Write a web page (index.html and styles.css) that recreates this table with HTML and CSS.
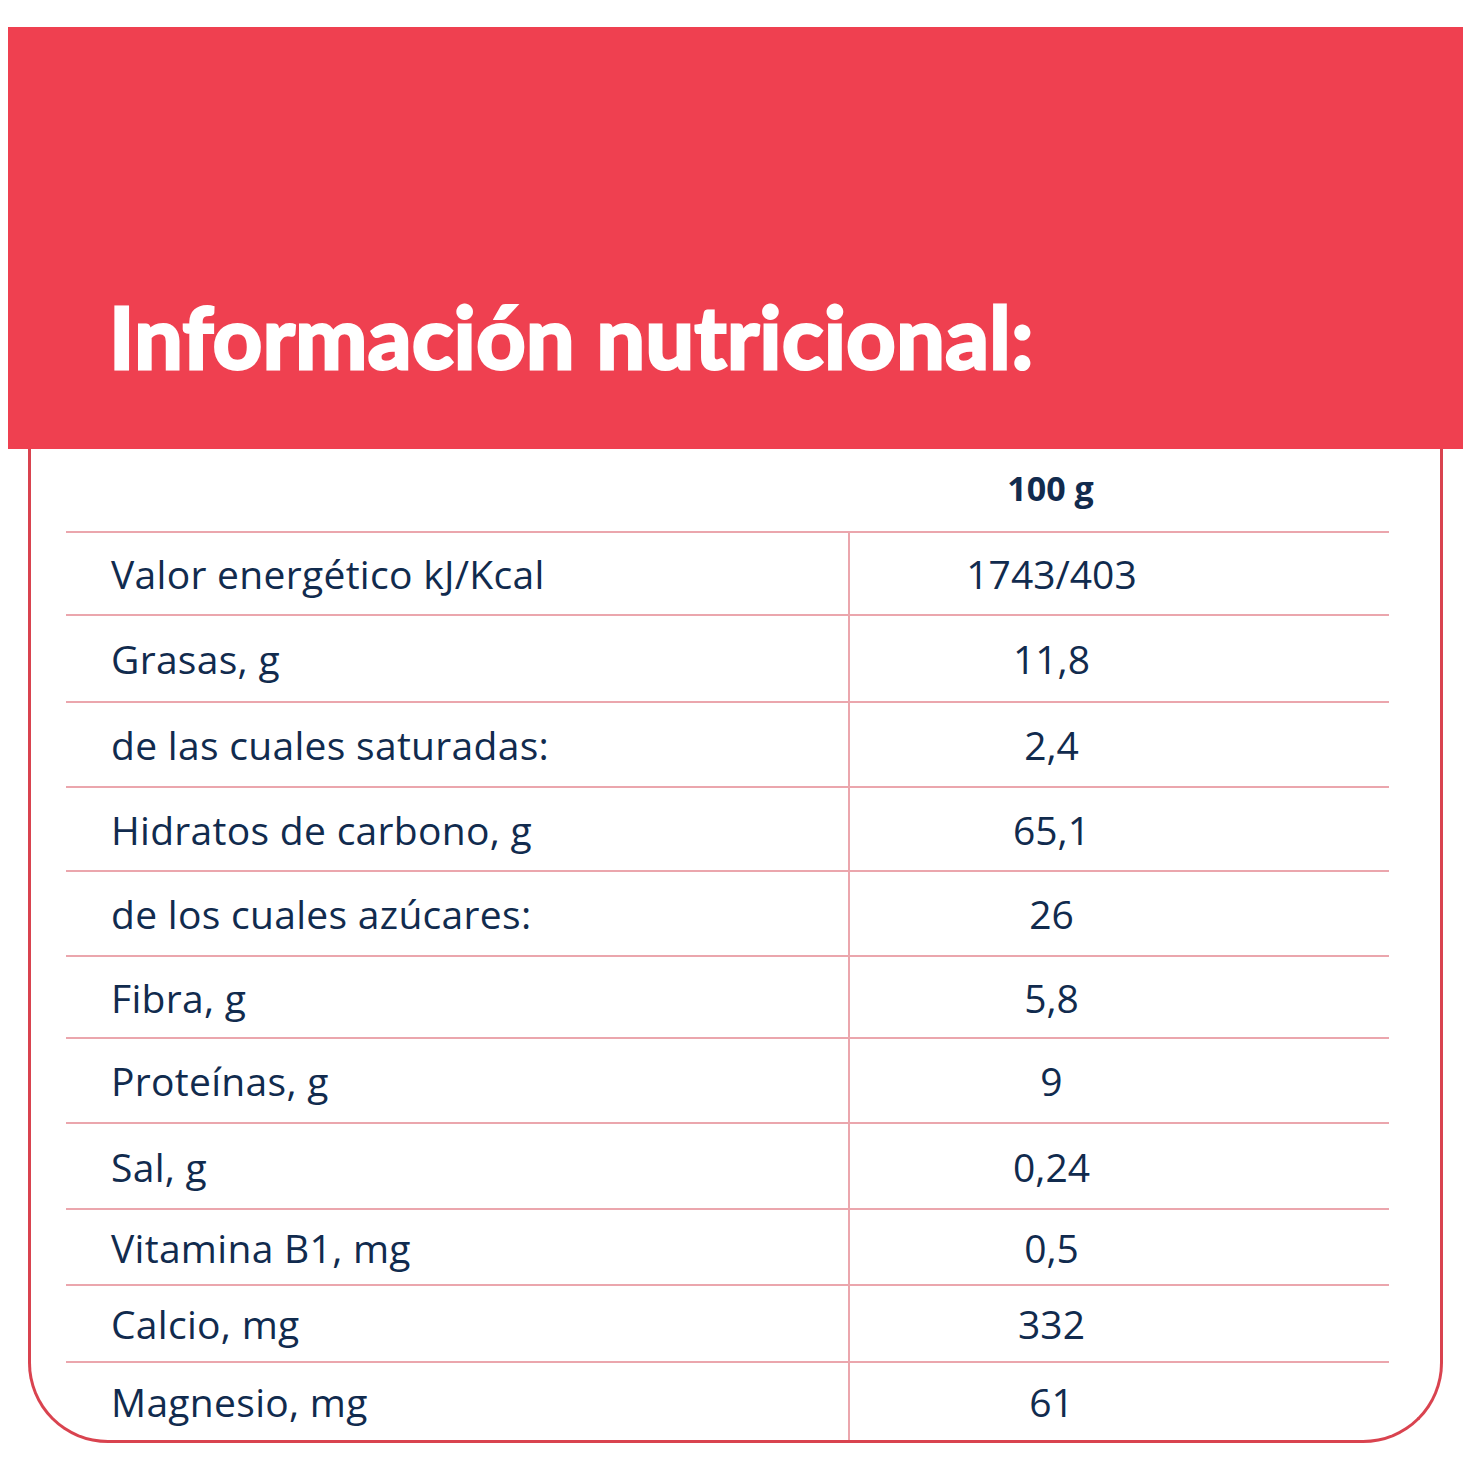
FILE: index.html
```html
<!DOCTYPE html>
<html lang="es">
<head>
<meta charset="utf-8">
<title>Información nutricional</title>
<link rel="stylesheet" href="styles.css">
</head>
<body>
<div class="card">
  <header class="banner">
    <h1 class="title">Información nutricional:</h1>
  </header>
  <div class="panel">
    <div class="row head">
      <div class="label"></div>
      <div class="value">100 g</div>
    </div>
    <div class="row"><div class="label">Valor energético kJ/Kcal</div><div class="value">1743/403</div></div>
    <div class="row"><div class="label">Grasas, g</div><div class="value">11,8</div></div>
    <div class="row"><div class="label">de las cuales saturadas:</div><div class="value">2,4</div></div>
    <div class="row"><div class="label">Hidratos de carbono, g</div><div class="value">65,1</div></div>
    <div class="row"><div class="label">de los cuales azúcares:</div><div class="value">26</div></div>
    <div class="row"><div class="label">Fibra, g</div><div class="value">5,8</div></div>
    <div class="row"><div class="label">Proteínas, g</div><div class="value">9</div></div>
    <div class="row"><div class="label">Sal, g</div><div class="value">0,24</div></div>
    <div class="row"><div class="label">Vitamina B1, mg</div><div class="value">0,5</div></div>
    <div class="row"><div class="label">Calcio, mg</div><div class="value">332</div></div>
    <div class="row last"><div class="label">Magnesio, mg</div><div class="value">61</div></div>
  </div>
</div>
</body>
</html>
```
FILE: styles.css
```css
html, body {
  margin: 0;
  padding: 0;
  background: #ffffff;
}

.card {
  width: 1455px;
  margin: 27px 0 0 8px;
}

.banner {
  background: #ef4050;
  height: 422px;
  display: flex;
  align-items: flex-end;
  box-sizing: border-box;
  padding: 0 0 70px 101px;
}

.title {
  margin: 0;
  color: #ffffff;
  font-family: Lato, sans-serif;
  font-weight: 700;
  font-size: 86px;
  line-height: 1;
  letter-spacing: 0.5px;
  -webkit-text-stroke: 3px #ffffff;
  paint-order: stroke fill;
}

.panel {
  margin: 0 20px;
  border: 3px solid #d9434f;
  border-top: none;
  border-radius: 0 0 80px 80px;
  padding: 0 51px 0 35px;
  height: 994px;
  box-sizing: border-box;
  display: flex;
  flex-direction: column;
}

.row {
  display: grid;
  grid-template-columns: 782px 1fr;
  border-top: 2px solid #eba6ad;
  font-family: "Open Sans", sans-serif;
  font-size: 39px;
  color: #112b4e;
  box-sizing: border-box;
}

.row.head {
  border-top: none;
  height: 82px;
}

.row:nth-child(2) { height: 83px; }
.row:nth-child(3) { height: 87px; }
.row:nth-child(4) { height: 85px; }
.row:nth-child(5) { height: 84px; }
.row:nth-child(6) { height: 85px; }
.row:nth-child(7) { height: 82px; }
.row:nth-child(8) { height: 85px; }
.row:nth-child(9) { height: 86px; }
.row:nth-child(10) { height: 76px; }
.row:nth-child(11) { height: 77px; }
.row:nth-child(12) { flex: 1; }

.label {
  display: flex;
  align-items: center;
  padding-left: 45px;
  letter-spacing: 0.3px;
}

.value {
  display: flex;
  align-items: center;
  justify-content: center;
  padding-right: 136px;
  border-left: 2px solid #eba6ad;
}

.row.head .value {
  border-left: none;
  font-weight: 700;
  font-size: 34px;
  padding-bottom: 4px;
}
```
